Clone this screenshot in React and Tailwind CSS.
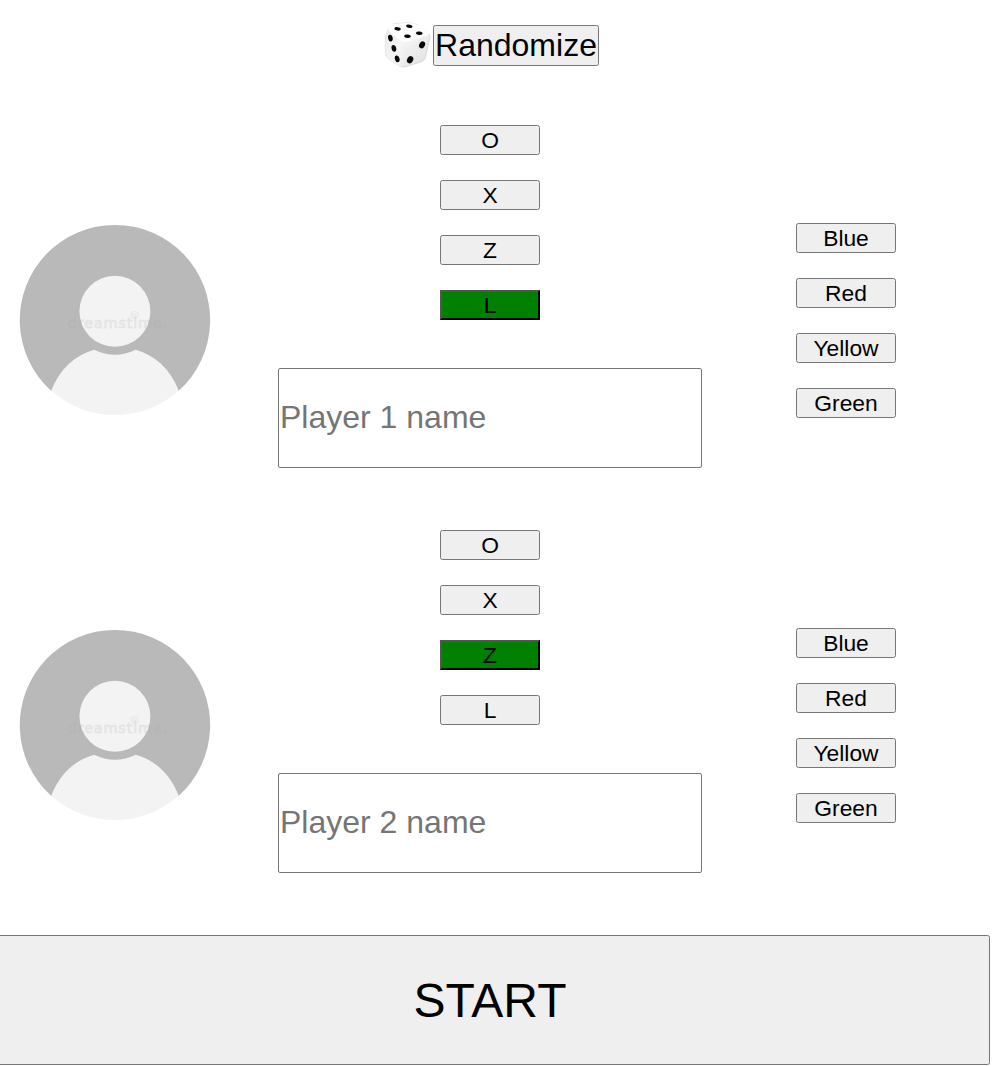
import React from "react";

const SYMBOLS = ["O", "X", "Z", "L"];
const COLORS = ["Blue", "Red", "Yellow", "Green"];

function Dice() {
  const pips = [
    [12.8, 7.7, 3.2, 1.7, 8],
    [24.5, 5.1, 3.2, 1.6, 8],
    [22.7, 15.1, 3.3, 1.7, 5],
    [34.5, 12.1, 3.3, 1.7, 5],
    [5.6, 16.9, 2.3, 3.4, -12],
    [9.1, 27.2, 2.3, 3.4, -14],
    [12.4, 37.6, 2.3, 3.4, -16],
    [37.3, 23.7, 2.8, 3.7, 30],
    [25.3, 38.6, 2.9, 3.8, 30],
  ];
  return (
    <svg className="block h-[47px] w-[47px] shrink-0" viewBox="-0.8 -0.2 47 47">
      <defs>
        <linearGradient id="dieLeft" x1="0" y1="0" x2="1" y2="1">
          <stop offset="0" stopColor="#eaeaea" />
          <stop offset="0.6" stopColor="#f5f5f5" />
          <stop offset="1" stopColor="#ececec" />
        </linearGradient>
        <linearGradient id="dieRight" x1="0" y1="0" x2="0.8" y2="1">
          <stop offset="0" stopColor="#fafafa" />
          <stop offset="0.5" stopColor="#f3f3f3" />
          <stop offset="1" stopColor="#e2e2e2" />
        </linearGradient>
      </defs>
      <path d="M3 9 Q0.2 15 0.5 23 L0.8 33 Q1 35.5 4 38 L15 45 Q17 46.4 20 45.7 L37 40.5 Q39.5 39.5 40.7 36 L45.2 16 Q45.6 13.5 42 11 L32 3.5 Q29 2 24 1.5 L10 2.4 Q6 3 3 9Z" fill="url(#dieRight)" stroke="#d4d4d4" strokeWidth="0.8" />
      <path d="M3.3 8.5 Q5 11 11 16 L17.5 21 Q19.5 23 19.3 28 L18 45.9 Q16 45.8 14 44.5 L4 38 Q1 35.5 0.8 33 L0.5 22 Q0.5 13 3.3 8.5Z" fill="url(#dieLeft)" />
      <path d="M3.4 7.3 Q5 3.3 10 2.5 L24 1.5 Q30 1.7 34 4.5 L43 11 Q45.4 13.2 42 14.5 L22.5 20.5 Q19 21.6 16 19.5 L5 10.8 Q2.7 9 3.4 7.3Z" fill="#fdfdfd" />
      {pips.map(([x, y, rx, ry, angle]) => (
        <ellipse key={`${x}-${y}`} cx={x} cy={y} rx={rx} ry={ry} fill="#080808" transform={`rotate(${angle} ${x} ${y})`} />
      ))}
    </svg>
  );
}

function Avatar() {
  return (
    <svg className="block h-[192px] w-[192px]" viewBox="0.3 0.2 192 192">
      <path d="M32.7 167.2 A95.2 95.2 0 1 1 159.8 167.2Z" fill="#b9b9b9" />
      <path d="M32.5 166.8 Q45.5 134.5 75.5 126 Q96.2 136 117 126 Q147 134.5 160 166.8 A95.2 95.2 0 0 1 32.5 166.8Z" fill="#f3f3f3" />
      <circle cx="96.2" cy="87.5" r="35.5" fill="#f3f3f3" />
      <g fill="none" stroke="#e3e3e3" strokeWidth="0.9">
        <circle cx="116" cy="91" r="3.6" />
        <circle cx="116" cy="91" r="1.5" />
      </g>
      <text x="49" y="104.5" fontFamily="DejaVu Sans, sans-serif" fontSize="14.4" letterSpacing="0.85" fill="#aaaaaa" fillOpacity="0.08" stroke="#aaaaaa" strokeOpacity="0.18" strokeWidth="1">
        dreamstime.
      </text>
    </svg>
  );
}

function Option({ label, selected }) {
  return (
    <button
      className={
        selected
          ? "flex h-[30px] w-[100px] items-center justify-center border-2 border-black [border-style:outset] bg-[#008000] text-[22.8px] leading-[26px] text-black"
          : "flex h-[30px] w-[100px] items-center justify-center rounded-[2.5px] border border-[#767676] bg-[#efefef] text-[22.8px] leading-[26px] text-black"
      }
    >
      {label}
    </button>
  );
}

function Player({ name, symbol }) {
  return (
    <section className="flex h-[405px]">
      <div className="w-[278px] shrink-0 pt-[104px] pl-[19px]">
        <Avatar />
      </div>
      <div className="flex w-[424px] shrink-0 flex-col items-center pt-[5px]">
        <div className="flex flex-col gap-[25px]">
          {SYMBOLS.map((s) => (
            <Option key={s} label={s} selected={s === symbol} />
          ))}
        </div>
        <input
          type="text"
          placeholder={name}
          className="mt-12 h-[100px] w-[424px] shrink-0 rounded-[2px] border border-[#767676] bg-white px-px pb-[2px] text-[32px] placeholder:text-[#757575]"
        />
      </div>
      <div className="ml-[94px] flex flex-col gap-[25px] pt-[103px]">
        {COLORS.map((c) => (
          <Option key={c} label={c} />
        ))}
      </div>
    </section>
  );
}

export default function App() {
  return (
    <main className="h-[1066px] w-full overflow-hidden bg-white font-['Liberation_Sans',Arial,sans-serif]">
      <header className="flex h-[120px] items-start pt-[21px] pl-[384px]">
        <Dice />
        <button className="mt-1 ml-[2px] flex h-[41px] w-[166px] items-center justify-center rounded-[2.5px] border border-[#767676] bg-[#efefef] text-[32px] leading-[37px] text-black">
          Randomize
        </button>
      </header>
      <Player name="Player 1 name" symbol="L" />
      <Player name="Player 2 name" symbol="Z" />
      <button className="mt-[5px] -ml-[10px] flex h-[130px] w-[1000px] items-center justify-center rounded-[2.5px] border border-[#767676] bg-[#efefef] pt-[2px] text-[48px] text-black">
        START
      </button>
    </main>
  );
}
